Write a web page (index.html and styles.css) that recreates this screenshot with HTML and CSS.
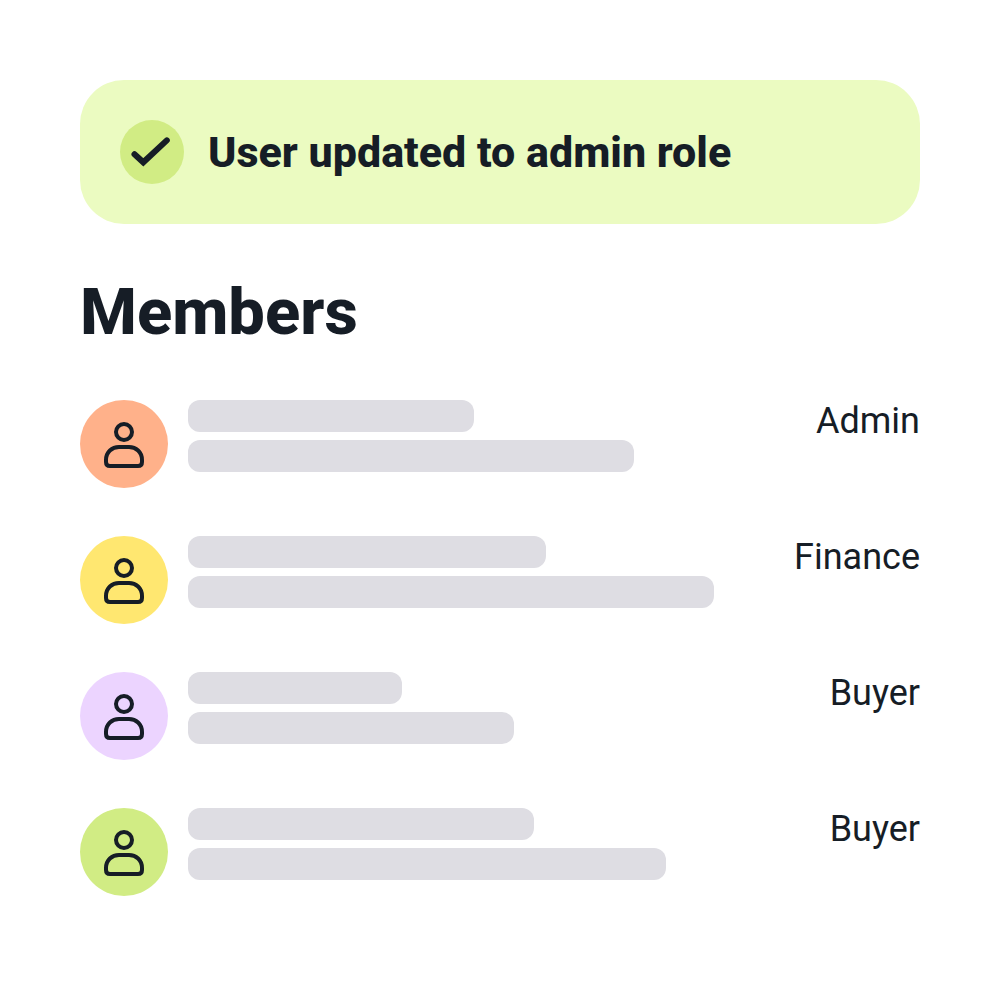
FILE: index.html
```html
<!DOCTYPE html>
<html lang="en">
<head>
<meta charset="utf-8">
<meta name="viewport" content="width=device-width, initial-scale=1">
<title>Members</title>
<link rel="stylesheet" href="styles.css">
</head>
<body>
<svg class="symbols" aria-hidden="true">
  <symbol id="person" viewBox="0 0 88 88">
    <circle cx="44" cy="32" r="8"/>
    <path d="M26 62V60C26 52 32 47 39 47H49C56 47 62 52 62 60V62Q62 66 58 66H30Q26 66 26 62Z"/>
  </symbol>
</svg>
<main class="page">
  <div class="notice" role="status">
    <svg class="notice-icon" viewBox="0 0 64 64" aria-hidden="true">
      <circle cx="32" cy="32" r="32"/>
      <path d="M14.5 34.2 23.3 42.3 46.8 20.4"/>
    </svg>
    <p class="notice-text">User updated to admin role</p>
  </div>
  <h1 class="title">Members</h1>
  <ul class="members">
    <li class="member">
      <svg class="avatar avatar-orange" aria-hidden="true"><use href="#person"/></svg>
      <div class="details"><span class="bar" style="width: 286px"></span><span class="bar" style="width: 446px"></span></div>
      <span class="role">Admin</span>
    </li>
    <li class="member">
      <svg class="avatar avatar-yellow" aria-hidden="true"><use href="#person"/></svg>
      <div class="details"><span class="bar" style="width: 358px"></span><span class="bar" style="width: 526px"></span></div>
      <span class="role">Finance</span>
    </li>
    <li class="member">
      <svg class="avatar avatar-purple" aria-hidden="true"><use href="#person"/></svg>
      <div class="details"><span class="bar" style="width: 214px"></span><span class="bar" style="width: 326px"></span></div>
      <span class="role">Buyer</span>
    </li>
    <li class="member">
      <svg class="avatar avatar-green" aria-hidden="true"><use href="#person"/></svg>
      <div class="details"><span class="bar" style="width: 346px"></span><span class="bar" style="width: 478px"></span></div>
      <span class="role">Buyer</span>
    </li>
  </ul>
</main>
</body>
</html>
```
FILE: styles.css
```css
* { box-sizing: border-box; }
body {
  margin: 0;
  background: #fff;
  color: #161d26;
  font-family: Roboto, "Liberation Sans", sans-serif;
}
.symbols { display: none; }
.page { padding: 80px; }
.notice {
  display: flex;
  align-items: center;
  gap: 24px;
  padding: 40px;
  border-radius: 44px;
  background: #ebfbc1;
}
.notice-icon { flex: none; width: 64px; height: 64px; }
.notice-icon circle { fill: #d1ec84; }
.notice-icon path {
  fill: none;
  stroke: #161d26;
  stroke-width: 6;
  stroke-linecap: round;
}
.notice-text {
  margin: 0;
  font-size: 43px;
  font-weight: 800;
  line-height: 64px;
}
.title {
  margin: 48px 0;
  font-size: 65px;
  font-weight: 800;
  line-height: 80px;
}
.members {
  display: flex;
  flex-direction: column;
  gap: 48px;
  margin: 0;
  padding: 0;
  list-style: none;
}
.member { display: flex; gap: 20px; }
.avatar {
  flex: none;
  width: 88px;
  height: 88px;
  border-radius: 50%;
  fill: none;
  stroke: #161d26;
  stroke-width: 4;
}
.avatar-orange { background: #ffb18a; }
.avatar-yellow { background: #ffe770; }
.avatar-purple { background: #ecd4ff; }
.avatar-green { background: #d1ec84; }
.details {
  display: flex;
  flex: 1;
  flex-direction: column;
  gap: 8px;
  min-width: 0;
}
.bar {
  max-width: 100%;
  height: 32px;
  border-radius: 12px;
  background: #dedde3;
}
.role {
  font-size: 36px;
  line-height: 42px;
}
```
